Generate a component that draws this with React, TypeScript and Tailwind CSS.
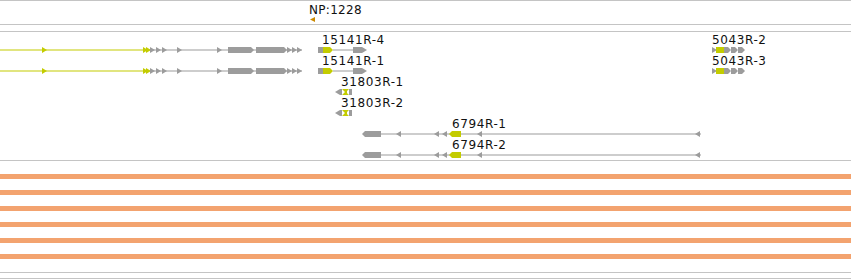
const GRAY = '#9c9c9c';
const LIME = '#c3cc00';

// small arrow head on an intron line
function ArrowR({ x, y, c = GRAY }: { x: number; y: number; c?: string }) {
  return <polygon points={`${x},${y - 3} ${x + 5},${y} ${x},${y + 3}`} fill={c} />;
}

function ArrowL({ x, y, c = GRAY }: { x: number; y: number; c?: string }) {
  return <polygon points={`${x + 5},${y - 3} ${x},${y} ${x + 5},${y + 3}`} fill={c} />;
}

function Label({ x, y, text, ls = 0.6 }: { x: number; y: number; text: string; ls?: number }) {
  return (
    <text x={x} y={y} fontSize={12} fill="#111" letterSpacing={ls} fontFamily="'DejaVu Sans', sans-serif">
      {text}
    </text>
  );
}

function LongGene({ y }: { y: number }) {
  return (
    <g>
      <rect x={0} y={y - 0.5} width={146} height={1} fill={LIME} />
      <rect x={146} y={y - 0.5} width={156} height={1} fill={GRAY} />
      <ArrowR x={42} y={y} c={LIME} />
      <ArrowR x={143} y={y} c={LIME} />
      <ArrowR x={146} y={y} c={LIME} />
      <ArrowR x={150} y={y} />
      <ArrowR x={156} y={y} />
      <ArrowR x={162} y={y} />
      <ArrowR x={177} y={y} />
      <ArrowR x={217} y={y} />
      <polygon points={`228,${y - 3} 251,${y - 3} 254,${y} 251,${y + 3} 228,${y + 3}`} fill={GRAY} />
      <polygon points={`256,${y - 3} 284,${y - 3} 287,${y} 284,${y + 3} 256,${y + 3}`} fill={GRAY} />
      <ArrowR x={287} y={y} />
      <ArrowR x={292} y={y} />
      <ArrowR x={297} y={y} />
    </g>
  );
}

function Gene15141({ y }: { y: number }) {
  return (
    <g>
      <rect x={318} y={y - 3} width={5} height={6} fill={GRAY} />
      <polygon points={`323,${y - 3} 330,${y - 3} 333,${y} 330,${y + 3} 323,${y + 3}`} fill={LIME} />
      <rect x={333} y={y - 0.5} width={21} height={1} fill={GRAY} />
      <polygon points={`353,${y - 3} 362,${y - 3} 367,${y} 362,${y + 3} 353,${y + 3}`} fill={GRAY} />
    </g>
  );
}

function Gene31803({ y }: { y: number }) {
  return (
    <g>
      <polygon points={`335,${y} 340,${y - 3} 342,${y - 3} 342,${y + 3} 340,${y + 3}`} fill={GRAY} />
      <polygon points={`342,${y - 3} 349,${y - 3} 346,${y} 349,${y + 3} 342,${y + 3} 345,${y}`} fill={LIME} />
      <rect x={345} y={y - 2} width={2} height={4} fill={LIME} />
      <rect x={349} y={y - 3} width={3} height={6} fill={GRAY} />
    </g>
  );
}

function Gene6794({ y }: { y: number }) {
  return (
    <g>
      <rect x={381} y={y - 0.5} width={320} height={1} fill={GRAY} />
      <polygon points={`362,${y} 365,${y - 3} 381,${y - 3} 381,${y + 3} 365,${y + 3}`} fill={GRAY} />
      <ArrowL x={396} y={y} />
      <ArrowL x={434} y={y} />
      <ArrowL x={442} y={y} />
      <polygon points={`449,${y} 452,${y - 3} 461,${y - 3} 461,${y + 3} 452,${y + 3}`} fill={LIME} />
      <ArrowL x={477} y={y} />
      <ArrowL x={695} y={y} />
    </g>
  );
}

function Gene5043({ y }: { y: number }) {
  return (
    <g>
      <polygon points={`712,${y - 3} 717,${y} 712,${y + 3}`} fill={GRAY} />
      <rect x={716} y={y - 3} width={8} height={6} fill={LIME} />
      <polygon points={`724,${y - 3} 728,${y - 3} 731,${y} 728,${y + 3} 724,${y + 3}`} fill={GRAY} />
      <polygon points={`731,${y - 3} 735,${y - 3} 738,${y} 735,${y + 3} 731,${y + 3}`} fill={GRAY} />
      <polygon points={`738,${y - 3} 742,${y - 3} 745,${y} 742,${y + 3} 738,${y + 3}`} fill={GRAY} />
    </g>
  );
}

export default function App() {
  // gene track starts at page y=32, so offsets below are relative to it
  const o = 32;
  return (
    <div className="w-[851px] h-[280px] bg-white flex flex-col overflow-hidden">
      <div className="h-[24px] border-t border-[#c4c4c4] shrink-0">
        <svg width={851} height={23} className="block">
          <Label x={309} y={13} text="NP:1228" ls={0.3} />
          <polygon points="310,18.5 315,16 315,21" fill="#cc8a00" />
        </svg>
      </div>
      <div className="h-[7px] border-t border-[#c4c4c4] shrink-0" />
      <div className="h-[129px] border-t border-[#c4c4c4] shrink-0">
        <svg width={851} height={128} className="block">
          <LongGene y={50 - o} />
          <LongGene y={71 - o} />
          <Gene15141 y={50 - o} />
          <Gene15141 y={71 - o} />
          <Label x={322} y={44 - o} text="15141R-4" />
          <Label x={322} y={65 - o} text="15141R-1" />
          <Gene31803 y={92 - o} />
          <Gene31803 y={113 - o} />
          <Label x={341} y={86 - o} text="31803R-1" />
          <Label x={341} y={107 - o} text="31803R-2" />
          <Gene6794 y={134 - o} />
          <Gene6794 y={155 - o} />
          <Label x={452} y={128 - o} text="6794R-1" />
          <Label x={452} y={149 - o} text="6794R-2" />
          <Gene5043 y={50 - o} />
          <Gene5043 y={71 - o} />
          <Label x={712} y={44 - o} text="5043R-2" />
          <Label x={712} y={65 - o} text="5043R-3" />
        </svg>
      </div>
      <div className="h-[112px] border-t border-[#c4c4c4] shrink-0 pt-[13px] flex flex-col gap-[11px]">
        <div className="h-[5px] bg-[#f3a36f]" />
        <div className="h-[5px] bg-[#f3a36f]" />
        <div className="h-[5px] bg-[#f3a36f]" />
        <div className="h-[5px] bg-[#f3a36f]" />
        <div className="h-[5px] bg-[#f3a36f]" />
        <div className="h-[5px] bg-[#f3a36f]" />
      </div>
      <div className="h-[7px] border-t border-b border-[#c4c4c4] shrink-0" />
    </div>
  );
}
